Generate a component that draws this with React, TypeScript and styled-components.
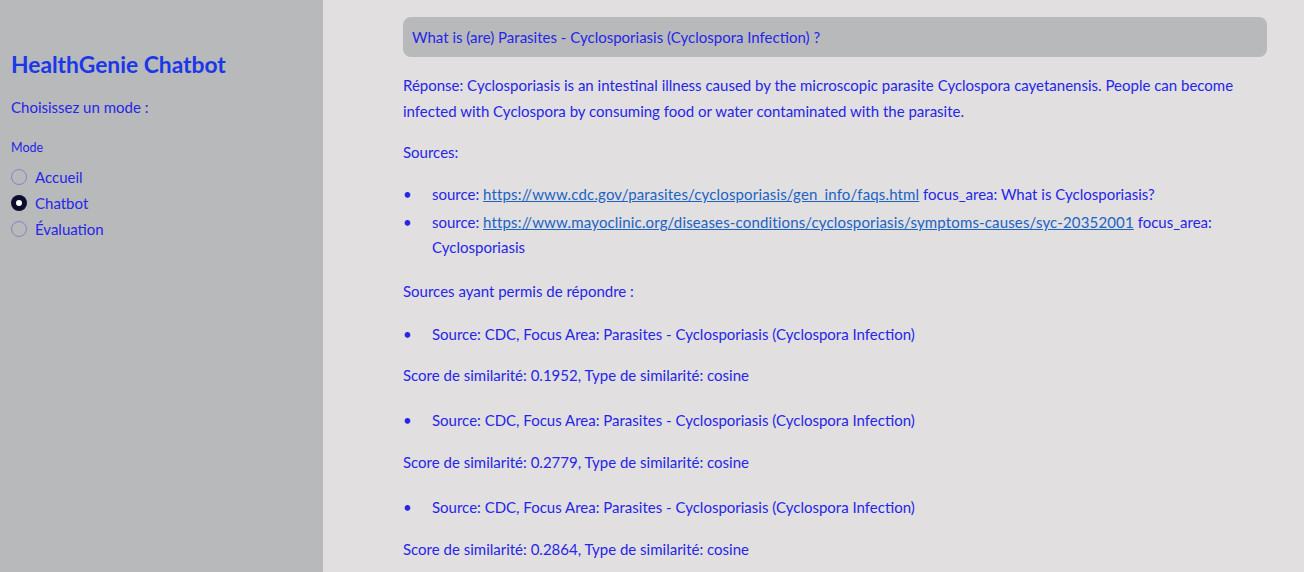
import React from "react";
import styled, { createGlobalStyle } from "styled-components";

const GlobalStyle = createGlobalStyle`
  html, body { margin: 0; padding: 0; }
  body {
    font-family: Lato, "Noto Sans", "Liberation Sans", sans-serif;
    background: #e1dfe0;
    overflow: hidden;
  }
  * { box-sizing: border-box; }
`;

const TEXT = "#2626e8";
const TITLE = "#1a38e8";
const LINK = "#1b63c4";

const Page = styled.div`
  display: flex;
  width: 1304px;
  height: 572px;
  overflow: hidden;
  background: #e1dfe0;
  color: ${TEXT};
  font-size: 15px;
`;

const Sidebar = styled.aside`
  width: 323px;
  flex: 0 0 323px;
  background: #b8b9bb;
  padding: 49px 11px 0 11px;
  display: flex;
  flex-direction: column;
`;

const Title = styled.h1`
  margin: 0;
  font-size: 22.8px;
  line-height: 30px;
  font-weight: 700;
  color: ${TITLE};
`;

const ModePrompt = styled.p`
  margin: 16px 0 0 0;
  font-size: 15px;
  line-height: 24px;
`;

const FieldLabel = styled.div`
  margin-top: 20px;
  font-size: 12.5px;
  line-height: 18px;
`;

const RadioGroup = styled.div`
  margin-top: 7px;
  display: flex;
  flex-direction: column;
`;

const RadioRow = styled.label`
  display: flex;
  align-items: center;
  gap: 8px;
  height: 26px;
  font-size: 15px;
`;

const RadioCircle = styled.span<{ $checked?: boolean }>`
  width: 16px;
  height: 16px;
  border-radius: 50%;
  flex: 0 0 16px;
  display: flex;
  align-items: center;
  justify-content: center;
  border: ${(p) => (p.$checked ? "none" : "1px solid #8086c4")};
  background: ${(p) => (p.$checked ? "#0d0d2e" : "transparent")};
  &::after {
    content: "";
    display: ${(p) => (p.$checked ? "block" : "none")};
    width: 6px;
    height: 6px;
    border-radius: 50%;
    background: #ffffff;
  }
`;

const Main = styled.main`
  flex: 1;
  padding: 17px 37px 0 80px;
  display: flex;
  flex-direction: column;
`;

const Question = styled.div`
  height: 40px;
  background: #b8b9bb;
  border-radius: 8px;
  padding: 0 9px;
  display: flex;
  align-items: center;
  font-size: 15px;
  margin-bottom: 16px;
`;

const Para = styled.p<{ $mb?: number }>`
  margin: 0 0 ${(p) => p.$mb ?? 16}px 0;
  line-height: 25.6px;
`;

const List = styled.ul<{ $mb?: number }>`
  list-style: none;
  margin: 0 0 ${(p) => p.$mb ?? 16}px 0;
  padding: 0;
  display: flex;
  flex-direction: column;
  gap: 2.4px;
`;

const Item = styled.li`
  display: flex;
  line-height: 25.6px;
`;

const ItemText = styled.span`
  flex: 1;
  min-width: 0;
`;

const Marker = styled.span`
  flex: 0 0 29px;
  &::before {
    content: "•";
  }
`;

const Link = styled.a`
  color: ${LINK};
  text-decoration: underline;
  letter-spacing: 0.15px;
`;

const sources = [
  { score: "0.1952", after: 19.5 },
  { score: "0.2779", after: 19.5 },
  { score: "0.2864", after: 0 },
];

export default function App() {
  return (
    <>
      <GlobalStyle />
      <Page>
        <Sidebar>
          <Title>HealthGenie Chatbot</Title>
          <ModePrompt>Choisissez un mode :</ModePrompt>
          <FieldLabel>Mode</FieldLabel>
          <RadioGroup>
            <RadioRow>
              <RadioCircle />
              Accueil
            </RadioRow>
            <RadioRow>
              <RadioCircle $checked />
              Chatbot
            </RadioRow>
            <RadioRow>
              <RadioCircle />
              Évaluation
            </RadioRow>
          </RadioGroup>
        </Sidebar>
        <Main>
          <Question>What is (are) Parasites - Cyclosporiasis (Cyclospora Infection) ?</Question>
          <Para>
            Réponse: Cyclosporiasis is an intestinal illness caused by the microscopic parasite Cyclospora
            cayetanensis. People can become infected with Cyclospora by consuming food or water contaminated
            with the parasite.
          </Para>
          <Para>Sources:</Para>
          <List $mb={18}>
            <Item>
              <Marker />
              <ItemText>
                source: <Link href="#">https://www.cdc.gov/parasites/cyclosporiasis/gen_info/faqs.html</Link>{" "}
                focus_area: What is Cyclosporiasis?
              </ItemText>
            </Item>
            <Item>
              <Marker />
              <ItemText>
                source:{" "}
                <Link href="#">
                  https://www.mayoclinic.org/diseases-conditions/cyclosporiasis/symptoms-causes/syc-20352001
                </Link>{" "}
                focus_area: Cyclosporiasis
              </ItemText>
            </Item>
          </List>
          <Para $mb={17}>Sources ayant permis de répondre :</Para>
          {sources.map((s) => (
            <React.Fragment key={s.score}>
              <List $mb={16}>
                <Item>
                  <Marker />
                  <ItemText>Source: CDC, Focus Area: Parasites - Cyclosporiasis (Cyclospora Infection)</ItemText>
                </Item>
              </List>
              <Para $mb={s.after}>Score de similarité: {s.score}, Type de similarité: cosine</Para>
            </React.Fragment>
          ))}
        </Main>
      </Page>
    </>
  );
}
